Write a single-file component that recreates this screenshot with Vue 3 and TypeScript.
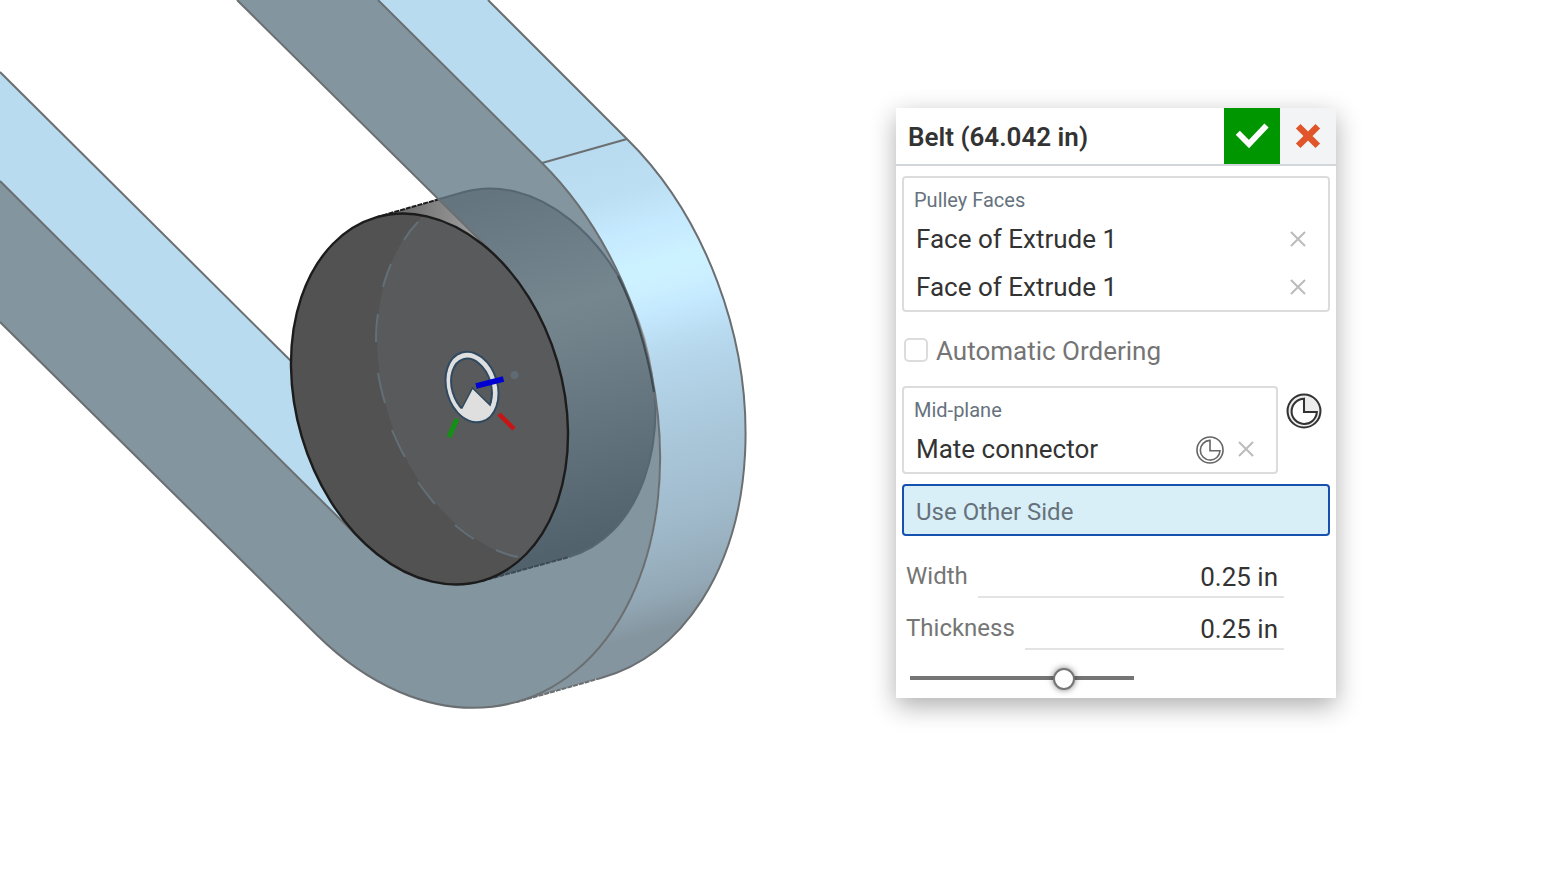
<script setup lang="ts">
import { ref } from 'vue'

interface Dimension {
  id: string
  label: string
  value: string
}

const faces = ref<string[]>(['Face of Extrude 1', 'Face of Extrude 1'])
const connector = ref<string | null>('Mate connector')
const automaticOrdering = ref(false)
const otherSide = ref(true)
const preview = ref(71)
const dimensions = ref<Dimension[]>([
  { id: 'width', label: 'Width', value: '0.25 in' },
  { id: 'thickness', label: 'Thickness', value: '0.25 in' },
])

function removeFace(index: number): void {
  faces.value.splice(index, 1)
}
</script>

<template>
  <main class="workspace">
    <svg class="scene" viewBox="0 0 760 720" role="img" aria-label="Belt around a pulley">
      <defs>
        <linearGradient id="rim" gradientUnits="userSpaceOnUse" x1="545" y1="163" x2="683" y2="656">
          <stop offset="0" stop-color="#b8dbef" />
          <stop offset="0.1" stop-color="#bddff4" />
          <stop offset="0.17" stop-color="#c5e9fe" />
          <stop offset="0.25" stop-color="#cdf2ff" />
          <stop offset="0.3" stop-color="#cbefff" />
          <stop offset="0.34" stop-color="#c4e8fe" />
          <stop offset="0.43" stop-color="#b6d7ec" />
          <stop offset="0.6" stop-color="#a9c6d9" />
          <stop offset="0.74" stop-color="#a0bacb" />
          <stop offset="0.87" stop-color="#93a8b6" />
          <stop offset="0.94" stop-color="#84959f" />
        </linearGradient>
        <linearGradient id="drum" gradientUnits="userSpaceOnUse" x1="470" y1="200" x2="568" y2="550">
          <stop offset="0" stop-color="#64757f" />
          <stop offset="0.35" stop-color="#75868f" />
          <stop offset="0.42" stop-color="#72838c" />
          <stop offset="0.7" stop-color="#62737d" />
          <stop offset="1" stop-color="#52626c" />
        </linearGradient>
        <linearGradient id="cap" gradientUnits="userSpaceOnUse" x1="400" y1="212" x2="470" y2="222">
          <stop offset="0" stop-color="#6c6c6c" />
          <stop offset="1" stop-color="#9a9a9a" />
        </linearGradient>
        <clipPath id="belt-clip">
          <path d="M237 0L497 257L362 541L0 181V322L317 635A221.5 314.8 -16.4 0 0 542 163L378 0Z" />
        </clipPath>
        <clipPath id="face-clip">
          <ellipse cx="429.5" cy="399" rx="133.2" ry="189.3" transform="rotate(-16.4 429.5 399)" />
        </clipPath>
      </defs>

      <path d="M0 72L300 370L362 541L0 181Z" fill="#b8dbef" />
      <path d="M0 72L300 370" class="edge" />

      <path
        d="M378 0H488L627 139A221.5 314.8 -16.4 0 1 601 678L517 702A221.5 314.8 -16.4 0 0 542 163Z"
        fill="url(#rim)"
      />
      <path d="M488 0L627 139A221.5 314.8 -16.4 0 1 601 678" class="edge" />
      <path d="M601 678L517 702" class="edge dotted" />
      <path d="M542 163L627 139" class="edge" />

      <path
        d="M377 217L464 192A133.2 189.3 -16.4 0 1 569 557L482 581L430 399Z"
        fill="url(#cap)"
      />
      <path d="M377 217L464 192" class="outline dotted" />

      <path
        d="M237 0L497 257A133.2 189.3 -16.4 1 1 362 541L0 181V322L317 635A221.5 314.8 -16.4 0 0 542 163L378 0Z"
        fill="#83959f"
      />
      <g clip-path="url(#belt-clip)">
        <path
          d="M377 217L464 192A133.2 189.3 -16.4 0 1 569 557L482 581L430 399Z"
          fill="url(#drum)"
        />
        <path
          d="M377 217L464 192A133.2 189.3 -16.4 0 1 569 557"
          fill="none"
          stroke="#566773"
          stroke-width="2"
        />
        <path d="M482 581L569 557" class="shade dotted" />
      </g>
      <path d="M237 0L497 257M0 181L362 541" class="edge" />
      <path d="M0 322L317 635A221.5 314.8 -16.4 0 0 542 163L378 0" class="edge" />
      <path d="M618 276C632 304 646 345 654 392" class="shade" />

      <g clip-path="url(#face-clip)">
        <path d="M280 200H580V600H280Z" fill="#525252" />
        <ellipse
          cx="515.5"
          cy="375"
          rx="133.2"
          ry="189.3"
          transform="rotate(-16.4 515.5 375)"
          fill="#595a5c"
        />
        <path d="M418 222C412 228 408 233 404 240M391 264C388 271 385 279 383 287M378 314C376 325 376 334 376 342M378 373C380 384 382 393 385 403M392 430C396 439 400 449 405 457M418 482C424 490 429 497 435 504M455 525C461 530 467 535 474 539M496 550C503 553 510 556 518 557" class="hidden-edge" />
      </g>
      <ellipse
        cx="429.5"
        cy="399"
        rx="133.2"
        ry="189.3"
        transform="rotate(-16.4 429.5 399)"
        class="outline"
      />

      <g>
        <ellipse cx="472" cy="387" rx="25.5" ry="36" transform="rotate(-16.4 472 387)" fill="#dfdfdf" stroke="#2f4a60" stroke-width="2" />
        <ellipse cx="471.5" cy="387" rx="19.5" ry="29" transform="rotate(-16.4 471.5 387)" fill="#595a5c" stroke="#2f4a60" stroke-width="2" />
        <path d="M472.5 388L490 405L492 410C488 423 466 423 458 411L462 408Z" fill="#dfdfdf" />
        <path d="M459 406L462 408L472.5 388L490 405L491.5 400" fill="none" stroke="#2f4a60" stroke-width="1.5" />
        <path d="M476 386L503.500 379" stroke="#0000d0" stroke-width="5.5" />
        <path d="M499 414L514 429" stroke="#c81414" stroke-width="4.5" />
        <path d="M457 419L449 437" stroke="#149014" stroke-width="5" />
        <circle cx="514.5" cy="375" r="4" fill="#5f6b74" />
      </g>
    </svg>

    <form class="panel" @submit.prevent>
      <header class="panel-header">
        <h1 class="title">Belt (64.042 in)</h1>
        <button class="accept" type="submit" aria-label="Accept">
          <svg viewBox="0 0 56 56" width="56" height="56">
            <path d="M13.8 24.8L25 36L42.5 17.5" fill="none" stroke="#fff" stroke-width="5.8" />
          </svg>
        </button>
        <button class="cancel" type="button" aria-label="Cancel">
          <svg viewBox="0 0 56 56" width="56" height="56">
            <path d="M18.2 18.2L37.8 37.8M37.8 18.2L18.2 37.8" stroke="#e0552a" stroke-width="6.5" />
          </svg>
        </button>
      </header>

      <div class="body">
        <section class="selection" aria-labelledby="faces-label">
          <h2 id="faces-label" class="caption">Pulley Faces</h2>
          <ul class="items">
            <li v-for="(face, index) in faces" :key="index" class="item">
              <span class="item-name">{{ face }}</span>
              <button class="clear" type="button" :aria-label="`Remove ${face}`" @click="removeFace(index)">
                <svg viewBox="0 0 24 24" width="24" height="24">
                  <path d="M5 5L19 19M19 5L5 19" stroke="#bbb" stroke-width="2" />
                </svg>
              </button>
            </li>
          </ul>
        </section>

        <label class="check-row">
          <input v-model="automaticOrdering" class="check" type="checkbox" />
          <span>Automatic Ordering</span>
        </label>

        <div class="plane-row">
          <section class="selection plane" aria-labelledby="plane-label">
            <h2 id="plane-label" class="caption">Mid-plane</h2>
            <div v-if="connector" class="item">
              <span class="item-name">{{ connector }}</span>
              <button class="edit" type="button" aria-label="Edit mate connector">
                <svg viewBox="0 0 35 35" width="28" height="28" fill="none" stroke="#666" stroke-width="2">
                  <circle cx="17.5" cy="17.5" r="16.3" />
                  <path d="M17.5 5.5V18.5H30A12.3 12.3 0 1 1 17.5 5.5Z" />
                </svg>
              </button>
              <button class="clear" type="button" aria-label="Remove mate connector" @click="connector = null">
                <svg viewBox="0 0 24 24" width="24" height="24">
                  <path d="M5 5L19 19M19 5L5 19" stroke="#bbb" stroke-width="2" />
                </svg>
              </button>
            </div>
          </section>
          <button class="pick" type="button" aria-label="Select mate connector">
            <svg viewBox="0 0 35 35" width="36" height="36" stroke="#333" stroke-width="2">
              <circle cx="17.5" cy="17.5" r="16" fill="#ededed" />
              <path d="M17.5 5.5V18.5H30A12.3 12.3 0 1 1 17.5 5.5Z" fill="#fff" />
            </svg>
          </button>
        </div>

        <button class="toggle" type="button" :aria-pressed="otherSide" @click="otherSide = !otherSide">
          Use Other Side
        </button>

        <div class="dimensions">
          <div v-for="dimension in dimensions" :key="dimension.id" class="dimension">
            <label class="dimension-label" :for="dimension.id">{{ dimension.label }}</label>
            <input :id="dimension.id" v-model="dimension.value" class="dimension-input" type="text" />
          </div>
          <input v-model.number="preview" class="slider" type="range" min="0" max="100" aria-label="Preview opacity" />
        </div>
      </div>
    </form>
  </main>
</template>

<style>
body {
  margin: 0;
  background: #fff;
}
</style>

<style scoped>
.workspace {
  display: flex;
  align-items: flex-start;
  gap: 136px;
  min-height: 100vh;
  font-family: Roboto, "Liberation Sans", sans-serif;
  font-size: 26px;
  color: #333;
}

.workspace *,
.workspace {
  box-sizing: border-box;
}

.scene {
  flex: none;
  width: 760px;
  height: 720px;
}

.edge,
.outline,
.shade,
.hidden-edge {
  fill: none;
  stroke: #6b6f71;
  stroke-width: 2;
}

.outline {
  stroke: #1c1c1c;
  stroke-width: 2.4;
}

.shade {
  stroke: #3d4a53;
}

.hidden-edge {
  stroke: #626f77;
}

.dotted {
  stroke-width: 2;
  stroke-dasharray: 5 1;
}

.panel {
  flex: 0 1 440px;
  min-width: 0;
  margin-top: 108px;
  background: #fff;
  box-shadow: 0 8px 24px rgba(0, 0, 0, 0.32);
}

button {
  padding: 0;
  border: 0;
  background: none;
  font: inherit;
  color: inherit;
  cursor: pointer;
}

button svg {
  display: block;
}

.panel-header {
  display: flex;
  align-items: center;
  border-bottom: 2px solid #d2d6da;
}

.title {
  flex: 1;
  margin: 0;
  padding: 2px 0 0 12px;
  font-size: 26px;
  font-weight: 600;
}

.accept {
  background: #009600;
}

.cancel {
  background: #f3f4f6;
}

.body {
  display: flex;
  flex-direction: column;
  gap: 10px;
  padding: 10px 6px 8px;
}

.selection {
  border: 2px solid #dcdcdc;
  border-radius: 4px;
}

.caption {
  margin: 0;
  padding: 10px 10px 2px;
  font-size: 20px;
  font-weight: 400;
  line-height: 24px;
  color: #66727d;
}

.items {
  margin: 0;
  padding: 0;
  list-style: none;
}

.item {
  display: flex;
  align-items: center;
  gap: 10px;
  height: 48px;
  padding: 2px 18px 0 12px;
}

.item-name {
  flex: 1;
}

.edit {
  padding-top: 2px;
}

.check-row {
  display: flex;
  align-items: center;
  gap: 8px;
  height: 54px;
  padding: 2px 2px 0;
  color: #757575;
}

.check-row span {
  padding-top: 2px;
}

.check {
  appearance: none;
  width: 24px;
  height: 24px;
  margin: 0;
  border: 2px solid #dcdcdc;
  border-radius: 5px;
  background: #fff;
}

.check:checked {
  background: #1651b0;
}

.plane-row {
  display: flex;
  align-items: flex-start;
  gap: 8px;
}

.plane {
  flex: 1;
}

.pick {
  margin: 7px 8px 0 0;
}

.toggle {
  height: 52px;
  padding: 3px 12px 0;
  border: 2px solid #dcdcdc;
  border-radius: 4px;
  font-size: 24px;
  text-align: left;
  color: #66727b;
}

.toggle[aria-pressed="true"] {
  border-color: #1651b0;
  background: #d9eff8;
}

.dimensions {
  padding: 0 46px 0 4px;
}

.dimension {
  display: flex;
  gap: 10px;
  height: 52px;
}

.dimension-label {
  padding-top: 8px;
  font-size: 24px;
  line-height: 44px;
  color: #757575;
}

.dimension-input {
  flex: 1;
  min-width: 0;
  padding: 12px 6px 0 0;
  border: 0;
  border-bottom: 2px solid #e3e3e3;
  outline: 0;
  background: none;
  font: inherit;
  color: inherit;
  text-align: right;
}

.slider {
  appearance: none;
  display: block;
  width: 224px;
  height: 24px;
  margin: 16px 0 0 4px;
  background: none;
}

.slider::-webkit-slider-runnable-track {
  height: 4px;
  background: #757575;
}

.slider::-webkit-slider-thumb {
  appearance: none;
  width: 22px;
  height: 22px;
  margin-top: -8px;
  border: 2px solid #757575;
  border-radius: 50%;
  background: #fff;
  box-shadow: 0 0 6px rgba(0, 0, 0, 0.5);
}
</style>
